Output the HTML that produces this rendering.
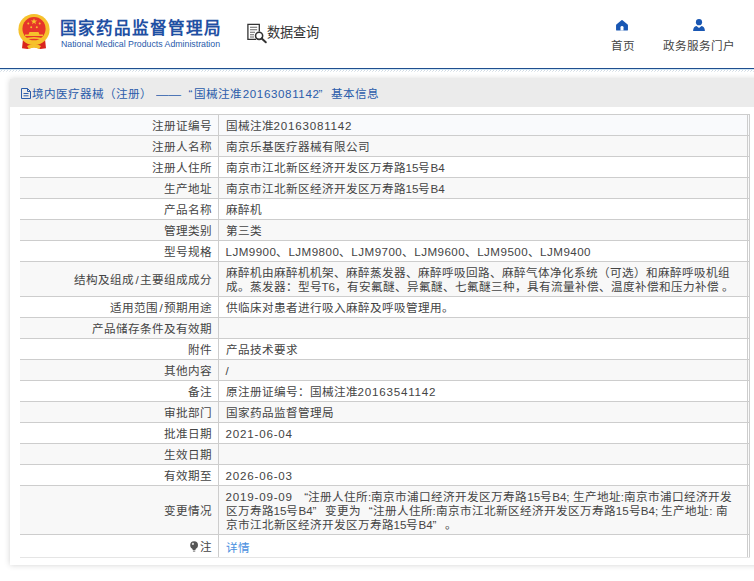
<!DOCTYPE html>
<html lang="zh-CN">
<head>
<meta charset="utf-8">
<title>国家药品监督管理局 数据查询</title>
<style>
*{box-sizing:border-box;margin:0;padding:0}
html,body{width:754px;height:581px;overflow:hidden;background:#fff}
body{font-family:"Liberation Sans",sans-serif;font-size:12px;color:#444;position:relative}
.abs{position:absolute}
#emblem{left:17px;top:12.5px;width:34px;height:38px}
#title{left:59.8px;top:17px;font-size:16.6px;line-height:24px;font-weight:bold;color:#1f50a3;white-space:nowrap;letter-spacing:1.02px}
#sub{left:61px;top:38px;font-size:8.75px;line-height:12px;color:#2a5bab;white-space:nowrap}
#qicon{left:246px;top:22px;width:22px;height:22px}
#qtext{left:267px;top:24px;font-size:13.2px;line-height:18px;color:#333;white-space:nowrap}
.nav{font-size:11.6px;line-height:16px;color:#444;white-space:nowrap;text-align:center}
#hline{left:0;top:68px;width:754px;height:1px;background:#1f4f8f}
#hline2{left:0;top:69px;width:754px;height:1px;background:#cfe6f5}
#hatch{left:0;top:69px;width:754px;height:3px}
#card{left:10px;top:79px;width:780px;height:486px;background:#fff;box-shadow:0 0 6px rgba(0,0,0,.18)}
#chead{left:0;top:0;width:780px;height:28px;background:#ebebeb;color:#2a5caa;font-size:11.6px;line-height:28px;white-space:nowrap}
#chead svg{position:absolute;left:11px;top:9px}
#chead span{position:absolute;top:1px}
#tbl{left:10px;top:35px;width:730px;font-size:11.6px}
.r{position:relative;width:730px;border-top:1px solid #cdcdcd;display:flex}
.r.g{background:#f8f8f8}
.r.f{background:#f9fafc}
.l{width:199px;padding:4px 6px 2px 0;text-align:right;line-height:14px;border-right:1px solid #cdcdcd;white-space:nowrap;display:flex;align-items:center;justify-content:flex-end}
.v{width:529px;padding:4px 0 2px 6.5px;line-height:14px;border-right:1px solid #cdcdcd;white-space:nowrap;min-height:20px}
.r::after{content:"";position:absolute;right:0;top:-1px;bottom:0;width:1px;background:#cdcdcd}
.last{border-bottom:1px solid #e5e5e5}
a{color:#4a8fe0;text-decoration:none}
.sl{padding:0 1.3px}
.d{letter-spacing:.8px}
.e{letter-spacing:.46px}
.ql,.qr{display:inline-block;width:12px}
.ql{text-align:right}
.qr{text-align:left}
</style>
</head>
<body>
<svg id="emblem" class="abs" viewBox="0 0 34 38">
  <path d="M6 26 L5 35.2 L10.5 36 L17 34 L23.5 36 L29 35.2 L28 26 Z" fill="#d9251d"/>
  <circle cx="17" cy="16.5" r="15.6" fill="#f6c12c"/>
  <circle cx="17" cy="15.7" r="11.6" fill="#e6352a"/>
  <path d="M8 23 L26 23 L26 21.5 L22.5 21.5 L21.5 19 L12.5 19 L11.5 21.5 L8 21.5 Z" fill="#f6c12c"/>
  <path d="M6.5 25.5 Q17 22.5 27.5 25.5 L27.5 27 Q17 24.5 6.5 27 Z" fill="#f6c12c"/>
  <path d="M10 33 Q17 29 24 33 L22 36 Q17 33.5 12 36 Z" fill="#f6c12c"/>
  <circle cx="17" cy="30" r="2.2" fill="#f6c12c"/>
  <polygon points="17,5.2 17.8,7.5 20.2,7.5 18.3,8.9 19,11.2 17,9.8 15,11.2 15.7,8.9 13.8,7.5 16.2,7.5" fill="#f6c12c"/>
  <circle cx="11.3" cy="10.6" r="1" fill="#f6c12c"/>
  <circle cx="22.7" cy="10.6" r="1" fill="#f6c12c"/>
  <circle cx="14.2" cy="14.2" r="1" fill="#f6c12c"/>
  <circle cx="19.8" cy="14.2" r="1" fill="#f6c12c"/>
</svg>
<div id="title" class="abs">国家药品监督管理局</div>
<div id="sub" class="abs">National Medical Products Administration</div>

<svg id="qicon" class="abs" viewBox="0 0 22 22" fill="none" stroke="#333" stroke-width="1.3">
  <path d="M10 17.3 H1.9 V2.4 H13.3 V9.5"/>
  <path d="M4 5.3 H11.2 M4 7.8 H11.2 M4 10.3 H9 M4 12.8 H8 M4 15 H8" stroke-width="1.1" stroke="#666"/>
  <circle cx="13.1" cy="13.8" r="3.55" stroke-width="1.6"/>
  <path d="M15.7 16.4 L19.8 20.2" stroke-width="2" stroke-linecap="round"/>
</svg>
<div id="qtext" class="abs">数据查询</div>

<svg class="abs" style="left:616.2px;top:20px" width="12" height="10.6" viewBox="0 0 12 10.6">
  <path d="M6 1 L11.1 5.2 V9.7 H0.9 V5.2 Z" fill="#1957b3" stroke="#1957b3" stroke-width="1.7" stroke-linejoin="round"/>
  <path d="M4.5 10.6 V7.2 Q4.5 6 6 6 Q7.5 6 7.5 7.2 V10.6 Z" fill="#fff"/>
</svg>
<div class="abs nav" style="left:598px;top:38px;width:50px">首页</div>
<svg class="abs" style="left:693.2px;top:18.9px" width="12" height="12" viewBox="0 0 12 12">
  <circle cx="6" cy="3.2" r="3.1" fill="#1957b3"/>
  <path d="M0.1 11.9 Q0.2 7.7 3.5 7 L6 9.1 L8.5 7 Q11.8 7.7 11.9 11.9 Z" fill="#1957b3"/>
</svg>
<div class="abs nav" style="left:648.5px;top:38px;width:100px">政务服务门户</div>

<svg id="hatch" class="abs" width="754" height="3" shape-rendering="crispEdges"><defs><pattern id="hp" width="3" height="3" patternUnits="userSpaceOnUse"><rect x="2" y="0" width="1" height="1" fill="#c9d6e2"/><rect x="1" y="1" width="1" height="1" fill="#cfd9e3"/><rect x="0" y="2" width="1" height="1" fill="#dfe6ec"/></pattern></defs><rect width="754" height="3" fill="url(#hp)"/></svg>
<div id="hline2" class="abs"></div>
<div id="hline" class="abs"></div>

<div id="card" class="abs">
  <div id="chead" class="abs">
    <svg width="10" height="11" viewBox="0 0 10 11" fill="none" stroke="#2a5caa" stroke-width="1"><path d="M0.5 0.5 H6.5 L9.5 3.5 V10.5 H0.5 Z M6.5 0.5 V3.5 H9.5 M2.5 5.5 H7.5 M2.5 7.8 H7.5"/></svg>
    <span style="left:21.7px">境内医疗器械（注册）</span><span style="left:145.6px;transform:scaleX(1.08);transform-origin:0 0">——</span><span style="left:178.4px">“</span><span style="left:184px">国械注准</span><span style="left:232.7px;letter-spacing:.62px">20163081142</span><span style="left:308.6px">”</span><span style="left:321px">基本信息</span>
  </div>
  <div id="tbl" class="abs">
    <div class="r f"><div class="l">注册证编号</div><div class="v">国械注准<span class="d">20163081142</span></div></div>
    <div class="r g"><div class="l">注册人名称</div><div class="v">南京乐基医疗器械有限公司</div></div>
    <div class="r"><div class="l">注册人住所</div><div class="v">南京市江北新区经济开发区万寿路15号B4</div></div>
    <div class="r g"><div class="l">生产地址</div><div class="v">南京市江北新区经济开发区万寿路15号B4</div></div>
    <div class="r"><div class="l">产品名称</div><div class="v">麻醉机</div></div>
    <div class="r g"><div class="l">管理类别</div><div class="v">第三类</div></div>
    <div class="r"><div class="l">型号规格</div><div class="v"><span class="e">LJM9900</span>、<span class="e">LJM9800</span>、<span class="e">LJM9700</span>、<span class="e">LJM9600</span>、<span class="e">LJM9500</span>、<span class="e">LJM9400</span></div></div>
    <div class="r g"><div class="l">结构及组成<span class="sl">/</span>主要组成成分</div><div class="v">麻醉机由麻醉机机架、麻醉蒸发器、麻醉呼吸回路、麻醉气体净化系统（可选）和麻醉呼吸机组<br>成。蒸发器：型号T6，有安氟醚、异氟醚、七氟醚三种，具有流量补偿、温度补偿和压力补偿 。</div></div>
    <div class="r"><div class="l">适用范围<span class="sl">/</span>预期用途</div><div class="v">供临床对患者进行吸入麻醉及呼吸管理用。</div></div>
    <div class="r g"><div class="l">产品储存条件及有效期</div><div class="v"></div></div>
    <div class="r"><div class="l">附件</div><div class="v">产品技术要求</div></div>
    <div class="r g"><div class="l">其他内容</div><div class="v">/</div></div>
    <div class="r"><div class="l">备注</div><div class="v">原注册证编号：国械注准<span class="d">20163541142</span></div></div>
    <div class="r g"><div class="l">审批部门</div><div class="v">国家药品监督管理局</div></div>
    <div class="r"><div class="l">批准日期</div><div class="v"><span class="d">2021-06-04</span></div></div>
    <div class="r g"><div class="l">生效日期</div><div class="v"></div></div>
    <div class="r"><div class="l">有效期至</div><div class="v"><span class="d">2026-06-03</span></div></div>
    <div class="r g"><div class="l">变更情况</div><div class="v"><span class="d">2019-09-09</span> <span class="ql">“</span>注册人住所:南京市浦口经济开发区万寿路15号B4; 生产地址:南京市浦口经济开发<br>区万寿路15号B4<span class="qr">”</span>变更为<span class="ql">“</span>注册人住所:南京市江北新区经济开发区万寿路15号B4; 生产地址: 南<br>京市江北新区经济开发区万寿路15号B4<span class="qr">”</span>。</div></div>
    <div class="r last"><div class="l" style="height:22px"><svg width="8.2" height="10.9" viewBox="0 0 9 12" style="margin-right:1.6px;margin-top:-1px"><circle cx="4.5" cy="4.5" r="4.3" fill="#555"/><path d="M2.4 7.5 H6.6 L6 10 H3 Z" fill="#555"/><rect x="3.2" y="10.6" width="2.6" height="1" fill="#555"/><circle cx="3.2" cy="3.2" r="1.2" fill="#ddd"/></svg>注</div><div class="v" style="padding-top:6px"><a>详情</a></div></div>
  </div>
</div>
</body>
</html>
